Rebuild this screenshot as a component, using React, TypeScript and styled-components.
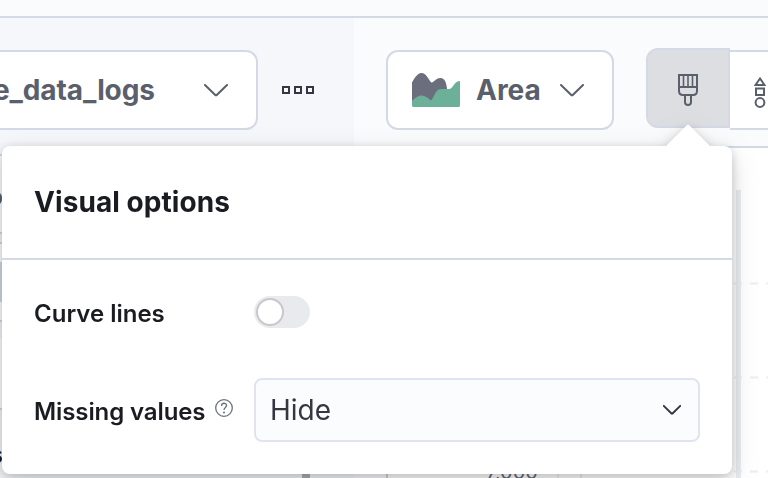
import React from "react";
import styled, { createGlobalStyle } from "styled-components";

const GlobalStyle = createGlobalStyle`
  *, *::before, *::after { box-sizing: border-box; }
  body { margin: 0; font-family: Inter, "Open Sans", sans-serif; color: #1a1c21; }
`;

const Page = styled.div`
  position: relative;
  width: 768px;
  height: 478px;
  overflow: hidden;
  display: grid;
  grid-template-rows: 18px 1fr;
  background: #fafbfd;
`;
const TopBar = styled.header`
  border-bottom: 2px solid #d3dae6;
`;
const Columns = styled.div`
  display: grid;
  grid-template-columns: 354px 1fr;
  min-height: 0;
`;
const Sidebar = styled.aside`
  display: flex;
  flex-direction: column;
  min-width: 0;
  min-height: 0;
  overflow: hidden;
  background: #f5f7fb;
`;
const SourceRow = styled.div`
  display: flex;
  align-items: center;
  flex: none;
  height: 136px;
  padding: 12px 0 4px;
`;
const Picker = styled.button<{ $width: number; $cut?: boolean }>`
  display: flex;
  align-items: center;
  flex: none;
  width: ${p => p.$width}px;
  height: 80px;
  padding: 0 28px 0 ${p => (p.$cut ? 0 : 24)}px;
  border: 2px solid #d3dae6;
  border-left-width: ${p => (p.$cut ? 0 : 2)}px;
  border-radius: ${p => (p.$cut ? "0 12px 12px 0" : "12px")};
  background: #fff;
  color: #5a606b;
  font: 700 28px/40px Inter, sans-serif;
`;
const PickerLabel = styled.span<{ $shift?: number; $gap?: number }>`
  margin-left: ${p => p.$shift ?? 0}px;
  margin-right: auto;
  padding-left: ${p => p.$gap ?? 0}px;
  letter-spacing: ${p => (p.$shift ? "-0.1px" : "0")};
  white-space: nowrap;
`;
const More = styled.svg`
  flex: none;
  margin-left: 24px;
`;
const FieldArea = styled.div`
  display: flex;
  justify-content: space-between;
  width: 310px;
  flex: 1;
  min-height: 0;
`;
const FieldList = styled.div`
  display: flex;
  flex-direction: column;
`;
const ScrollThumb = styled.div`
  width: 8px;
  background: #acafb6;
`;
const Field = styled.div<{ $h: number; $bg?: string; $line?: boolean }>`
  display: flex;
  justify-content: flex-end;
  align-items: center;
  width: 3px;
  height: ${p => p.$h}px;
  flex: none;
  background: ${p => p.$bg ?? "transparent"};
  border-top: ${p => (p.$line ? "2px solid #d3dae6" : "0")};
  font-size: 24px;
  font-weight: 600;
  line-height: 28px;
  white-space: nowrap;
`;
const FieldGlyph = styled.span`
  padding-top: 6px;
  color: #5a606b;
`;
const Workspace = styled.main`
  display: flex;
  flex-direction: column;
  min-width: 0;
  overflow: hidden;
`;
const Toolbar = styled.div`
  display: flex;
  align-items: flex-start;
  flex: none;
  gap: 32px;
  height: 130px;
  padding: 32px 0 0 32px;
  border-bottom: 2px solid #d3dae6;
`;
const IconGroup = styled.div`
  display: flex;
  align-items: flex-start;
  flex: none;
`;
const IconButton = styled.button<{ $active?: boolean }>`
  display: flex;
  align-items: center;
  justify-content: center;
  width: 84px;
  height: 80px;
  margin-top: ${p => (p.$active ? -2 : 0)}px;
  padding: ${p => (p.$active ? "4px 0 0" : "0")};
  border: 2px solid #d3dae6;
  border-left-width: ${p => (p.$active ? 2 : 0)}px;
  border-radius: ${p => (p.$active ? "12px 0 0 12px" : "0")};
  background: ${p => (p.$active ? "#dddee2" : "#fff")};
`;
const ShapesButton = styled(IconButton)`
  width: 62px;
  padding-top: 3px;
`;
const ChartArea = styled.div`
  flex: 1;
  min-height: 0;
  background: #fff;
  overflow: hidden;
`;
const Popover = styled.section`
  position: absolute;
  left: 2px;
  top: 146px;
  width: 730px;
  height: 328px;
  display: flex;
  flex-direction: column;
  border-radius: 8px;
  background: #fff;
  filter: drop-shadow(0 2px 5px rgba(0, 0, 0, 0.12)) drop-shadow(0 5px 8px rgba(0, 0, 0, 0.1))
    drop-shadow(0 8px 14px rgba(0, 0, 0, 0.1));
`;
const Arrow = styled.svg`
  position: absolute;
  left: 663px;
  top: -22px;
`;
const PopoverTitle = styled.h2`
  margin: 0;
  height: 114px;
  padding: 32px;
  border-bottom: 2px solid #d3dae6;
  font-size: 28px;
  font-weight: 700;
  line-height: 48px;
  letter-spacing: 0.07px;
`;
const Form = styled.div`
  display: grid;
  grid-template-columns: 220px 446px;
  grid-template-rows: 64px 64px;
  row-gap: 34px;
  padding: 20px 32px 0;
  align-items: center;
`;
const Label = styled.label<{ $tight?: boolean }>`
  display: flex;
  align-items: center;
  gap: 10px;
  padding-top: 3px;
  font-size: 24px;
  font-weight: 600;
  line-height: 32px;
  letter-spacing: ${p => (p.$tight ? "-0.1px" : "0")};
  white-space: nowrap;
`;
const HelpIcon = styled.svg`
  flex: none;
  margin-top: -8px;
`;
const Switch = styled.button`
  display: flex;
  align-items: center;
  width: 56px;
  height: 32px;
  padding: 0 2px;
  border: 0;
  border-radius: 16px;
  background: #e9eaee;
`;
const Thumb = styled.span`
  width: 28px;
  height: 28px;
  border: 2px solid #c8c8ca;
  border-radius: 50%;
  background: #fff;
`;
const Select = styled.div`
  display: flex;
  align-items: center;
  justify-content: space-between;
  height: 64px;
  padding: 0 17px 0 14px;
  border: 2px solid #e1e4f0;
  border-radius: 8px;
  background: #fbfcfd;
  color: #343741;
  font-size: 28px;
`;

const Chevron = ({ small = false }: { small?: boolean }) => (
  <svg width={small ? 18 : 24} height={small ? 10 : 13} viewBox="0 0 24 13" fill="none"
    stroke={small ? "#343741" : "#5a606b"} strokeWidth={small ? 2.6 : 2} strokeLinecap="round">
    <path d="M1 1 11 10.8Q12 11.8 13 10.8L23 1" />
  </svg>
);

const AreaIcon = () => (
  <svg width="48" height="34" viewBox="0 0 48 34">
    <path fill="#6b6e7c" d="M0 9.5C4 2 7 0 9.5 0C14 0 16.5 6 19 9.2Q20 10 21.5 8.6C24 6.6 25.5 5 28.5 5C33 5 34.5 10 35 16V31H0Z" />
    <path fill="#6db09a" d="M0 28C4 24 7 22.5 9.5 22.5C13 22.5 16 25 18.5 27.2Q19.5 27.8 20.5 25.5L24 19Q26 16 29 16H37C41 16 42 8 48 8V32.5Q48 34 46.5 34H1.5Q0 34 0 32.5Z" />
  </svg>
);

const BrushIcon = () => (
  <svg width="22" height="32" viewBox="0 0 22 32" fill="none" stroke="#5a606b" strokeWidth="2">
    <path d="M2 1H20V17Q20 21 16 21H6Q2 21 2 17ZM2 13H20" />
    <path d="M6.5 1V12M11 1V12M15.5 1V12" strokeWidth="1.6" />
    <path d="M8 21V28A3 3 0 0 0 14 28V21" />
  </svg>
);

const ShapesIcon = () => (
  <svg width="12" height="32" viewBox="0 0 12 32" fill="none" stroke="#5a606b" strokeWidth="2">
    <path d="M6 2.5 1.5 9H10.5ZM2 12.5H10V19H2Z" />
    <circle cx="6" cy="26.5" r="4.4" />
  </svg>
);

export default function App() {
  return (
    <>
      <GlobalStyle />
      <Page>
        <TopBar />
        <Columns>
          <Sidebar>
            <SourceRow>
              <Picker $width={258} $cut>
                <PickerLabel $shift={-7}>e_data_logs</PickerLabel>
                <Chevron />
              </Picker>
              <More width="32" height="8" viewBox="0 0 32 8" fill="none" stroke="#343741" strokeWidth="2">
                <path d="M1 1h6v6H1ZM13 1h6v6h-6ZM25 1h6v6h-6Z" />
              </More>
            </SourceRow>
            <FieldArea>
              <FieldList>
                <Field $h={78} $line $bg="#fff"><FieldGlyph>o</FieldGlyph></Field>
                <Field $h={10} $line />
                <Field $h={20} $line $bg="#fff" />
                <Field $h={40} $bg="#d3dae6" />
                <Field $h={18} $bg="#fff" />
                <Field $h={18} $line />
                <Field $h={70} $bg="#fff" />
                <Field $h={92} $line>s</Field>
              </FieldList>
              <ScrollThumb />
            </FieldArea>
          </Sidebar>
          <Workspace>
            <Toolbar>
              <Picker $width={228}>
                <AreaIcon />
                <PickerLabel $gap={16}>Area</PickerLabel>
                <Chevron />
              </Picker>
              <IconGroup>
                <IconButton $active aria-label="Visual options"><BrushIcon /></IconButton>
                <ShapesButton aria-label="Shapes"><ShapesIcon /></ShapesButton>
              </IconGroup>
            </Toolbar>
            <ChartArea>
              <svg width="414" height="330" viewBox="354 148 414 330">
                <path d="M354 478V148H387V478Z" fill="#fafbfd" />
                <path d="M387 148V478" stroke="#cfd3db" strokeWidth="2" />
                <path d="M558 148V478M581 148V478" stroke="#eeeff1" strokeWidth="2" />
                <path d="M590 283.5H768M590 377.5H768M590 471.5H768" stroke="#eceef1" strokeWidth="2" strokeDasharray="8 8" />
                <path d="M738.5 190V478" stroke="#ebecf1" strokeWidth="5" />
                <text x="486" y="479" fontSize="20" fill="#646a77">7,000</text>
              </svg>
            </ChartArea>
          </Workspace>
        </Columns>
        <Popover>
          <Arrow width="46" height="23" viewBox="0 0 46 23"><path fill="#fff" d="M0 23 22 1Q23 0 24 1L46 23Z" /></Arrow>
          <PopoverTitle>Visual options</PopoverTitle>
          <Form>
            <Label>Curve lines</Label>
            <Switch role="switch" aria-checked="false"><Thumb /></Switch>
            <Label $tight>
              Missing values
              <HelpIcon width="18" height="18" viewBox="0 0 18 18" fill="none" stroke="#69707d" strokeWidth="1.3">
                <circle cx="9" cy="9" r="8.3" />
                <path d="M6.5 7C6.5 3.3 11.5 3.5 11.5 6.6C11.5 8.5 9 8.4 9 11" />
                <circle cx="9" cy="13.5" r="1" fill="#69707d" stroke="none" />
              </HelpIcon>
            </Label>
            <Select>Hide<Chevron small /></Select>
          </Form>
        </Popover>
      </Page>
    </>
  );
}
